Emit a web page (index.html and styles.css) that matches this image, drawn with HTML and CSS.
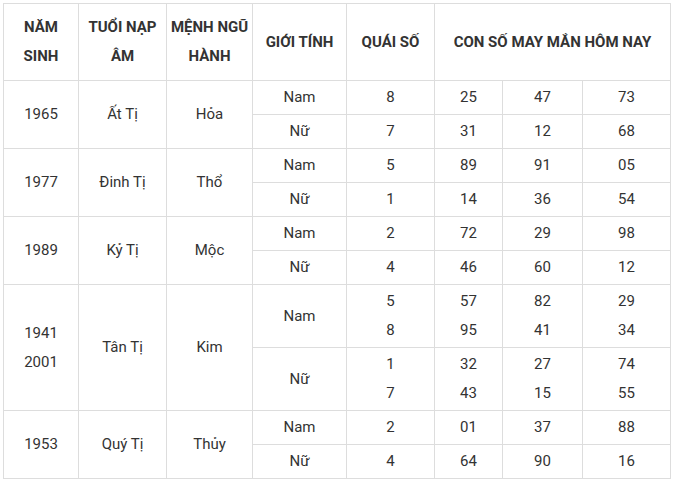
FILE: index.html
```html
<!DOCTYPE html>
<html lang="vi">
<head>
<meta charset="utf-8">
<title>Con số may mắn</title>
<link rel="stylesheet" href="styles.css">
</head>
<body>
<table class="lucky">
  <colgroup>
    <col class="c1"><col class="c2"><col class="c3"><col class="c4"><col class="c5"><col class="c6"><col class="c7"><col class="c8">
  </colgroup>
  <thead>
    <tr>
      <th>NĂM<br>SINH</th>
      <th>TUỔI NẠP<br>ÂM</th>
      <th>MỆNH NGŨ<br>HÀNH</th>
      <th>GIỚI TÍNH</th>
      <th>QUÁI SỐ</th>
      <th colspan="3">CON SỐ MAY MẮN HÔM NAY</th>
    </tr>
  </thead>
  <tbody>
    <tr><td rowspan="2">1965</td><td rowspan="2">Ất Tị</td><td rowspan="2">Hỏa</td><td>Nam</td><td>8</td><td>25</td><td>47</td><td>73</td></tr>
    <tr><td>Nữ</td><td>7</td><td>31</td><td>12</td><td>68</td></tr>
    <tr><td rowspan="2">1977</td><td rowspan="2">Đinh Tị</td><td rowspan="2">Thổ</td><td>Nam</td><td>5</td><td>89</td><td>91</td><td>05</td></tr>
    <tr><td>Nữ</td><td>1</td><td>14</td><td>36</td><td>54</td></tr>
    <tr><td rowspan="2">1989</td><td rowspan="2">Kỷ Tị</td><td rowspan="2">Mộc</td><td>Nam</td><td>2</td><td>72</td><td>29</td><td>98</td></tr>
    <tr><td>Nữ</td><td>4</td><td>46</td><td>60</td><td>12</td></tr>
    <tr><td rowspan="2">1941<br>2001</td><td rowspan="2">Tân Tị</td><td rowspan="2">Kim</td><td>Nam</td><td>5<br>8</td><td>57<br>95</td><td>82<br>41</td><td>29<br>34</td></tr>
    <tr><td>Nữ</td><td>1<br>7</td><td>32<br>43</td><td>27<br>15</td><td>74<br>55</td></tr>
    <tr><td rowspan="2">1953</td><td rowspan="2">Quý Tị</td><td rowspan="2">Thủy</td><td>Nam</td><td>2</td><td>01</td><td>37</td><td>88</td></tr>
    <tr><td>Nữ</td><td>4</td><td>64</td><td>90</td><td>16</td></tr>
  </tbody>
</table>
</body>
</html>
```
FILE: styles.css
```css
html, body {
  margin: 0;
  padding: 0;
  background: #fff;
}
body {
  padding: 3px;
  font-family: Roboto, "Liberation Sans", Arial, sans-serif;
  color: #333;
}
.lucky {
  border-collapse: collapse;
  table-layout: fixed;
  width: 668px;
  font-size: 15px;
  line-height: 29px;
}
.lucky .c1 { width: 75px; }
.lucky .c2 { width: 88px; }
.lucky .c3 { width: 86px; }
.lucky .c4 { width: 94px; }
.lucky .c5 { width: 88px; }
.lucky .c6 { width: 68px; }
.lucky .c7 { width: 80px; }
.lucky .c8 { width: 88px; }
.lucky th,
.lucky td {
  border: 1px solid #dddddd;
  text-align: center;
  vertical-align: middle;
  padding: 2px 2px;
}
.lucky th {
  font-weight: 700;
  padding: 9px 2px;
  color: #333;
}
.lucky td {
  font-weight: 400;
  color: #333;
}
```
